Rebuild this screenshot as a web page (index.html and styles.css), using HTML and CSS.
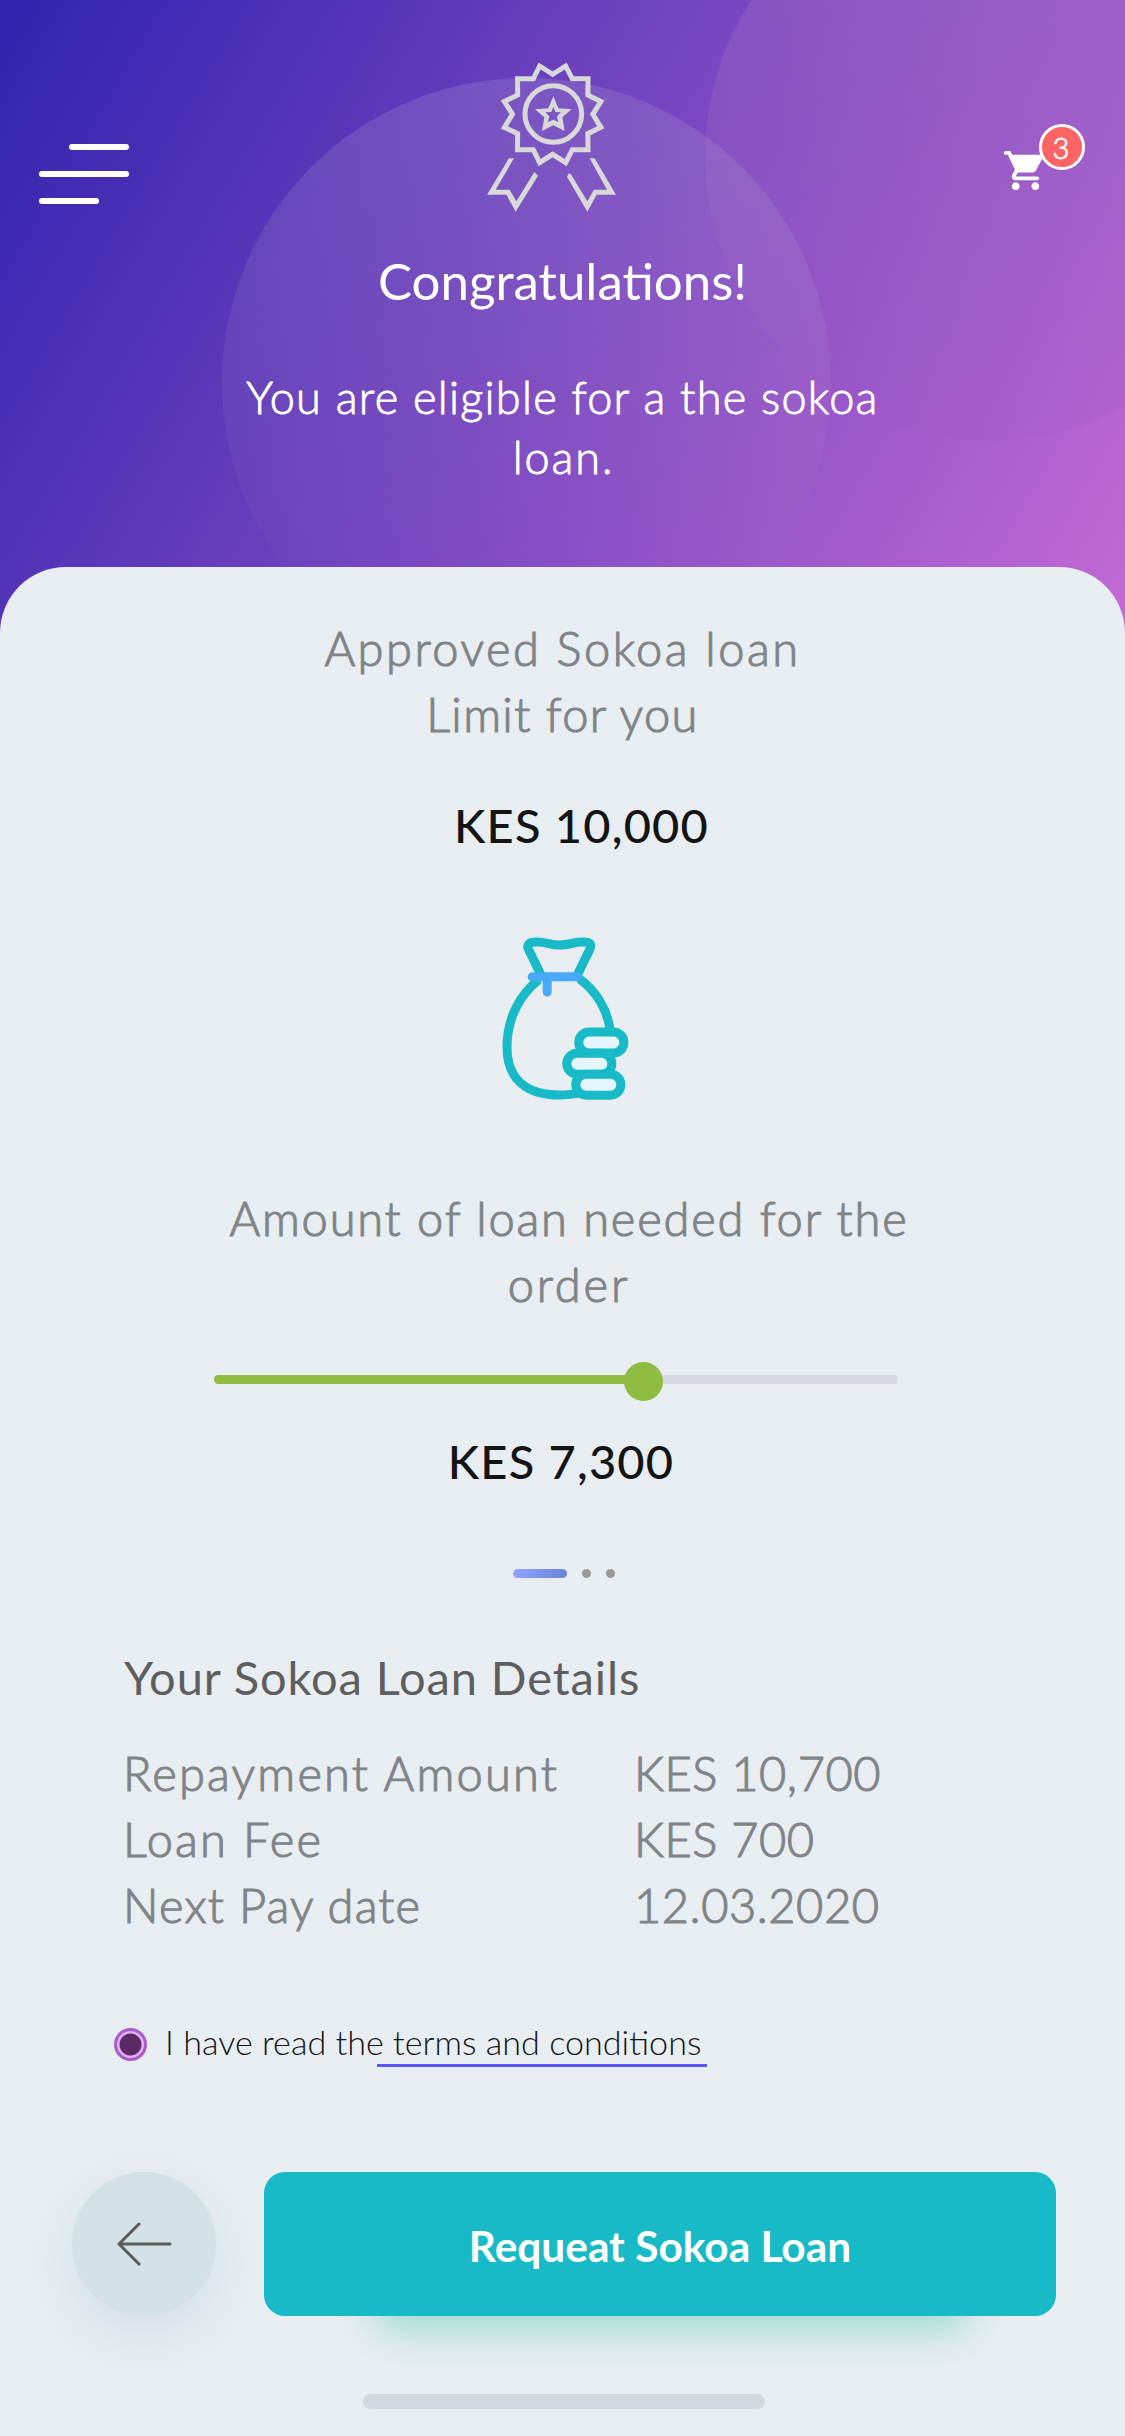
FILE: index.html
```html
<!DOCTYPE html>
<html lang="en">
<head>
<meta charset="utf-8">
<title>Sokoa Loan</title>
<link rel="stylesheet" href="styles.css">
</head>
<body>
<div class="screen">
  <header class="hero">
    <div class="orb orb-right"></div>
    <div class="orb orb-center"></div>
    <div class="topbar">
      <div class="menu"><span class="bar bar-top"></span><span class="bar"></span><span class="bar bar-bottom"></span></div>
      <svg class="award" viewBox="82 68 388 450">
        <path d="M240 80L279 105L318 80L338 118.500H385L384.500 167L423.500 186.500L399.500 225L423.500 264L384.500 283L385 331H338L318 370L279 345L240 370L221 331H173.500L174 283L134 264L158.500 225L134 186.500L174 167L173.500 118.500H221Z" fill="none" stroke="#d8d8d8" stroke-width="15"/>
        <circle cx="281" cy="224" r="85" fill="none" stroke="#d8d8d8" stroke-width="15"/>
        <path fill="#d8d8d8" fill-rule="evenodd" d="M281 171L296 207L336 210L308 234L315 275L281 258L247 275L254 234L226 210L266 207ZM281 202L275 218L257 219L269 231L265 248L281 241L296 248L292 231L304 219L287 218Z"/>
        <path fill="#d8d8d8" d="M148 357H163L108 451H150L170 486L224 398L235 409L168 517L140 466H82ZM390 357H405L469 466H411L383 517L322 412L328 401L335 406L383 486L403 451H442Z"/>
      </svg>
      <div class="cart">
        <svg class="cart-icon" viewBox="0 0 24 24"><path fill="#fff" d="M7 18c-1.100 0-1.990.9-1.990 2S5.900 22 7 22s2-.9 2-2-.9-2-2-2zM2 2a1 1 0 0 0 0 2h1l3.600 7.590-1.350 2.450c-.16.28-.25.61-.25.96 0 1.100.9 2 2 2h11a1 1 0 0 0 0-2H7.420c-.14 0-.25-.11-.25-.25l.03-.12.9-1.630h7.450c.75 0 1.410-.41 1.750-1.030l3.580-6.490c.08-.14.12-.31.12-.48 0-.55-.45-1-1-1H5.210l-.94-2H2zm15 16c-1.100 0-1.990.9-1.990 2s.89 2 1.990 2 2-.9 2-2-.9-2-2-2z"/></svg>
        <span class="badge">3</span>
      </div>
    </div>
    <h1 class="congrats">Congratulations!</h1>
    <p class="eligible">You are eligible for a the sokoa<br><span class="loan-word">loan.</span></p>
  </header>

  <main class="sheet">
    <p class="copy limit-label">Approved Sokoa loan<br><span class="limit-second">Limit for you</span></p>
    <p class="amount limit">KES 10,000</p>
    <svg class="bag" viewBox="64 80 384 492">
      <g fill="none" stroke="#17bac6" stroke-width="27">
        <path d="M183 192L147 118C140 105 148 97 160 96C195 92 210 104 240 104C270 104 290 92 320 96C333 97 337 105 330 118L294 192"/>
        <path d="M178 208C120 252 82 325 82 410C82 510 145 554 240 554C260 554 275 552 295 549M299 205C350 243 385 300 391 360"/>
      </g>
      <g fill="#e4f5fe" stroke="#17bac6" stroke-width="27">
        <rect x="297.500" y="365" width="135" height="63" rx="31"/>
        <rect x="261.500" y="428.500" width="135" height="63" rx="31"/>
        <rect x="288.500" y="491.500" width="135" height="63" rx="31"/>
      </g>
      <path d="M157.500 199.500H293M202.500 200V245" fill="none" stroke="#48a9f8" stroke-width="27" stroke-linecap="round"/>
    </svg>
    <p class="copy need-label">Amount of loan needed for the<br><span class="need-second">order</span></p>
    <div class="slider"><div class="fill"></div><div class="knob"></div></div>
    <p class="amount chosen">KES 7,300</p>
    <div class="pager"><span class="pill"></span><span class="dot"></span><span class="dot"></span></div>

    <section class="details">
      <h2 class="details-title">Your Sokoa Loan Details</h2>
      <dl class="rows">
        <dt class="wide">Repayment Amount</dt><dd>KES 10,700</dd>
        <dt class="wide">Loan Fee</dt><dd>KES 700</dd>
        <dt>Next Pay date</dt><dd>12.03.2020</dd>
      </dl>
    </section>

    <div class="terms">
      <span class="radio"></span>
      <span class="terms-text">I have read the terms and conditions</span>
      <span class="underline"></span>
    </div>

    <div class="actions">
      <div class="back">
        <svg class="arrow" viewBox="0 0 56 44"><path d="M23 2L3 22L23 42M3 22H54" fill="none" stroke="#5c5c5c" stroke-width="3" stroke-linecap="round" stroke-linejoin="round"/></svg>
      </div>
      <div class="request-wrap"><div class="request">Requeat Sokoa Loan</div></div>
    </div>
    <div class="home"></div>
  </main>
</div>
</body>
</html>
```
FILE: styles.css
```css
* { box-sizing: border-box; margin: 0; padding: 0; }
body { font-family: Lato, sans-serif; background: #e8edf1; }
.screen { width: 1125px; height: 2436px; overflow: hidden; background: #e8edf1; }

.hero {
  position: relative;
  height: 660px;
  padding-top: 62px;
  overflow: hidden;
  color: #fff;
  text-align: center;
  background: linear-gradient(120.400deg, #3023ae 0%, #c56bd6 100%);
}
.orb { position: absolute; border-radius: 50%; }
.orb-center { left: 222px; top: 78px; width: 609px; height: 609px; background: linear-gradient(rgba(190, 180, 212, .2), rgba(160, 130, 180, .08) 70%, rgba(160, 130, 180, 0) 85%); }
.orb-right { left: 705px; top: -129px; width: 570px; height: 570px; background: linear-gradient(rgba(156, 110, 196, .45), rgba(150, 80, 185, .12)); }
.topbar { position: relative; display: flex; height: 150px; padding-left: 39px; }
.menu { display: flex; flex-direction: column; gap: 21px; width: 90px; padding-top: 82px; }
.bar { height: 6px; border-radius: 3px; background: #fff; }
.bar-top { width: 60px; margin-left: 30px; }
.bar-bottom { width: 60px; }
.award { width: 129.330px; height: 150px; margin-left: 358px; }
.cart { position: relative; width: 83px; height: 70px; margin: 62px 0 0 385.700px; }
.cart-icon { display: block; width: 47px; height: 47px; margin-top: 23px; }
.badge {
  position: absolute; left: 37px; top: 0; width: 46px; height: 46px;
  border: 3px solid #fff; border-radius: 50%; background: #ff6464;
  font-size: 29px; font-weight: 300; line-height: 41px; text-align: center; padding-right: 2px;
  -webkit-text-stroke: .8px currentColor;
}
.congrats { position: relative; margin-top: 39px; font-size: 51px; line-height: 60px; font-weight: 400; }
.eligible {
  position: relative; margin-top: 56px; font-size: 45px; line-height: 60px; font-weight: 300;
  letter-spacing: 1.300px; -webkit-text-stroke: .9px currentColor;
}
.loan-word { letter-spacing: 1.900px; padding-left: 2px; }

.sheet { position: relative; height: 1869px; margin-top: -93px; padding-top: 48px; border-radius: 66px 66px 0 0; background: #e8edf1; }
.copy { font-size: 47px; line-height: 66px; font-weight: 300; text-align: center; color: #808487; -webkit-text-stroke: 1.100px currentColor; }
.limit-label { letter-spacing: 2.500px; }
.limit-second { letter-spacing: 1.350px; }
.amount { font-size: 47px; line-height: 66px; font-weight: 500; text-align: center; color: #141414; letter-spacing: 1.200px; }
.limit { margin-top: 45px; padding-left: 38px; }
.bag { display: block; width: 128px; height: 164px; margin: 79px 0 0 501.300px; }
.need-label { margin-top: 84px; padding-left: 13px; letter-spacing: 1.800px; }
.need-second { letter-spacing: 2.800px; }
.slider { position: relative; width: 684px; height: 9px; margin: 58px 0 0 214px; border-radius: 5px; background: #d6d8e4; }
.fill { width: 430px; height: 9px; border-radius: 5px; background: #8dbc41; }
.knob { position: absolute; left: 410px; top: -13px; width: 39px; height: 39px; border-radius: 50%; background: #8dbc41; }
.chosen { margin-top: 44px; padding-right: 3px; }
.pager { display: flex; gap: 15px; margin: 75px 0 0 513px; }
.pill { width: 54px; height: 9px; border-radius: 5px; background: linear-gradient(100deg, #93a5ff, #6685d8); }
.dot { width: 9px; height: 9px; border-radius: 50%; background: #999; }

.details { padding: 66px 0 0 123px; }
.details-title { padding-left: 1px; font-size: 47px; line-height: 66px; font-weight: 400; color: #5e5e5e; letter-spacing: .900px; }
.rows { display: grid; grid-template-columns: 511px 1fr; margin-top: 30px; font-size: 47px; line-height: 66px; font-weight: 300; color: #808487; -webkit-text-stroke: 1.100px currentColor; }
.rows dt { letter-spacing: 1.200px; }
.rows dt.wide { letter-spacing: 2.200px; }
.rows dd { letter-spacing: .550px; }

.terms { position: relative; display: flex; align-items: center; gap: 18px; height: 49px; margin: 82px 0 0 114px; }
.radio { width: 33px; height: 33px; border: 3px solid #a95cce; border-radius: 50%; background: radial-gradient(circle, #5d2a68 0 10.500px, #e3b3f7 11.500px); }
.terms-text { padding-bottom: 6px; font-size: 34.150px; line-height: 42px; font-weight: 300; color: #141414; }
.underline { position: absolute; left: 262.500px; top: 44px; width: 330px; height: 3px; background: #5555fa; }

.actions { display: flex; gap: 48px; margin-top: 103px; padding-left: 72px; }
.back { display: flex; align-items: center; justify-content: center; width: 144px; height: 144px; border-radius: 50%; background: #d1e1e6; box-shadow: 0 18px 50px rgba(185, 200, 225, .42); }
.arrow { width: 56px; height: 44px; }
.request-wrap { position: relative; }
.request-wrap::before {
  content: ""; position: absolute; left: 112px; bottom: -14px; width: 590px; height: 70px;
  background: rgba(95, 205, 180, .55); filter: blur(19px);
}
.request {
  position: relative; width: 792px; height: 144px; border-radius: 21px; background: #17bac6; color: #fff;
  font-size: 42.400px; font-weight: 700; line-height: 148px; text-align: center;
}
.home { width: 402px; height: 15px; margin: 78px 0 0 363px; border-radius: 8px; background: #d2d8e0; }
```
